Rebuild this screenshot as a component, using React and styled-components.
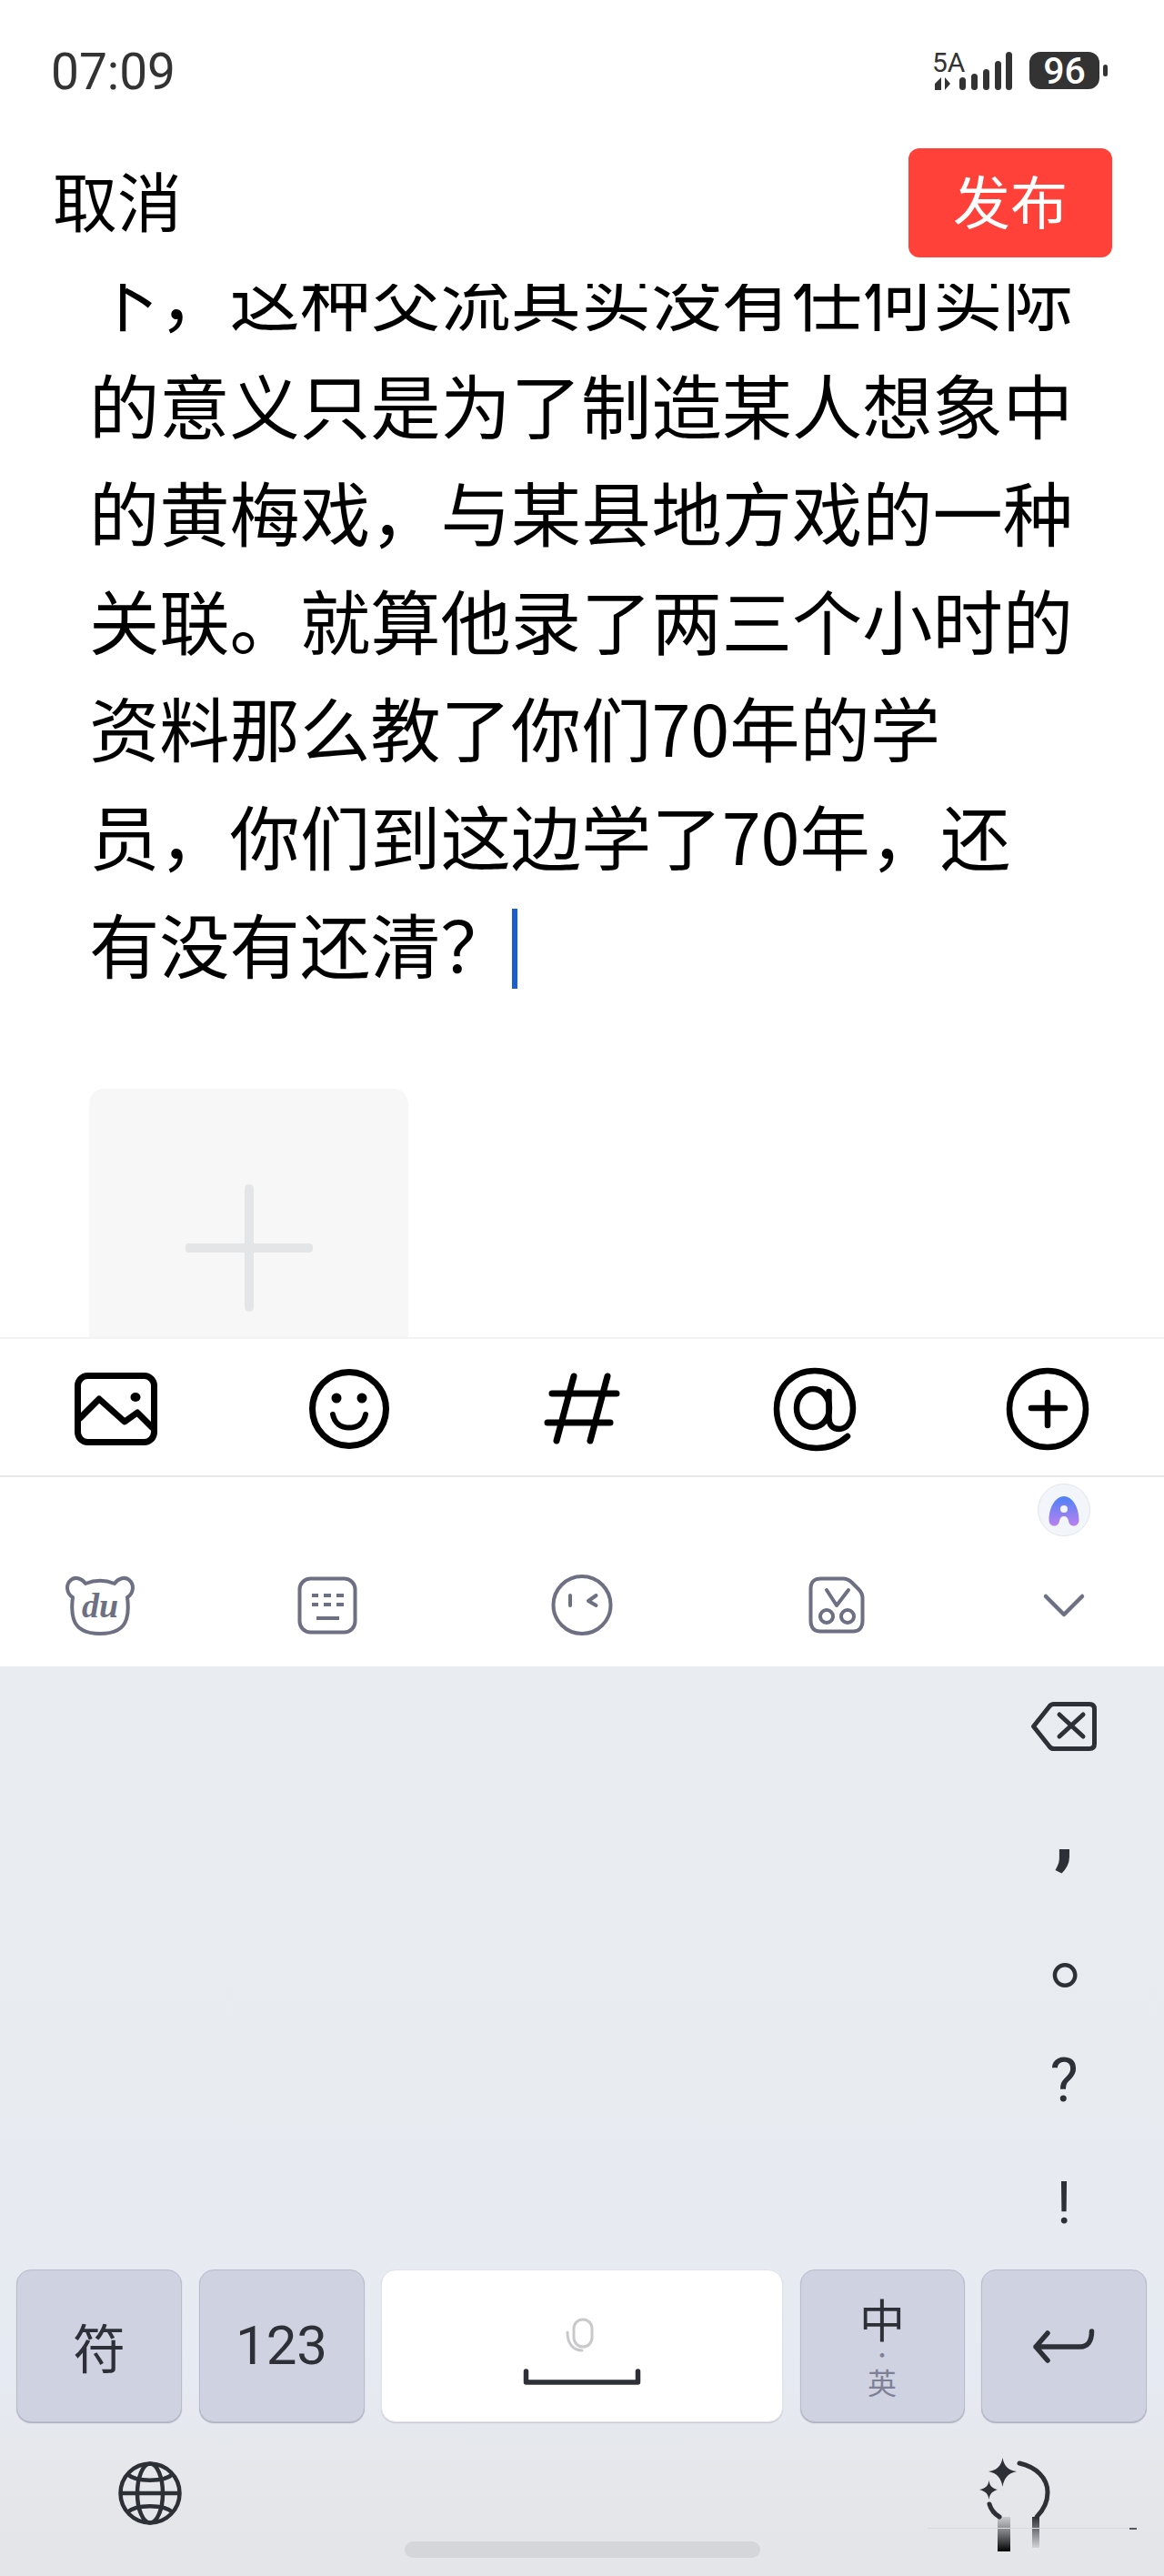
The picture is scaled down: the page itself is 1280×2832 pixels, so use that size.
import React from "react";
import styled, { createGlobalStyle } from "styled-components";

const Global = createGlobalStyle`
  html, body { margin: 0; padding: 0; background: #fff; }
  * { box-sizing: border-box; }
`;

const CJK = `"Noto Sans CJK SC", "Noto Sans", sans-serif`;

const Page = styled.div`
  width: 1280px;
  height: 2832px;
  display: flex;
  flex-direction: column;
  overflow: hidden;
  background: #fff;
  font-family: ${CJK};
  color: #000;
`;

const StatusBar = styled.div`
  height: 120px;
  padding: 38px 60px 0 56px;
  display: flex;
  justify-content: space-between;
  align-items: center;
`;
const Clock = styled.span`
  font-family: Roboto, sans-serif;
  font-size: 55px;
  line-height: 60px;
  color: #333;
`;
const Header = styled.div`
  padding: 43px 57px 0 58px;
  display: flex;
  justify-content: space-between;
  align-items: center;
`;
const Cancel = styled.span`
  font-size: 71px;
  line-height: 110px;
  padding-bottom: 10px;
`;
const Publish = styled.button`
  width: 224px;
  height: 120px;
  border: 0;
  padding: 0 0 8px;
  border-radius: 12px;
  background: #ff4139;
  color: #fff;
  font-family: ${CJK};
  font-size: 63px;
  line-height: 112px;
`;

const Editor = styled.div`
  height: 1158px;
  margin-top: 29px;
  padding-left: 98px;
  overflow: hidden;
`;
const Body = styled.div`
  margin-top: -47px;
  font-size: 77.3px;
  line-height: 118.6px;
  white-space: nowrap;
`;
const Line = styled.div``;
const Caret = styled.span`
  display: inline-block;
  width: 6px;
  height: 88px;
  margin: 0 0 12px 1px;
  vertical-align: middle;
  background: #1a5fd0;
`;
const AddCard = styled.div`
  width: 351px;
  height: 351px;
  margin-top: 98px;
  margin-left: 0;
  border-radius: 16px;
  background: #f7f7f7;
  display: flex;
  align-items: center;
  justify-content: center;
`;

const Toolbar = styled.div`
  height: 154px;
  padding-top: 3px;
  display: grid;
  grid-template-columns: repeat(5, 1fr);
  align-items: center;
  justify-items: center;
  border-top: 2px solid #f3f3f3;
  border-bottom: 2px solid #e8e8e8;
`;

const ImeBar = styled.div`
  height: 208px;
  padding-top: 7px;
  display: flex;
  flex-direction: column;
`;
const AiRow = styled.div`
  display: flex;
  justify-content: flex-end;
  padding-right: 81px;
`;
const AiBadge = styled.div`
  width: 58px;
  height: 58px;
  border-radius: 50%;
  background: #f2f5fa;
  border: 1px solid #e3e5ea;
`;
const ImeTools = styled.div`
  margin-top: 42px;
  display: grid;
  grid-template-columns: 220px 280px 280px 280px 220px;
  align-items: center;
  justify-items: center;
`;

const Keyboard = styled.div`
  flex: 1;
  display: flex;
  flex-direction: column;
  background: linear-gradient(180deg, #e9ecf0 0%, #e8ebf0 45%, #e6eaf2 78%, #e5e6e9 92%, #e4e5e8 100%);
`;
const KeyArea = styled.div`
  height: 663px;
  display: flex;
  justify-content: flex-end;
  padding-right: 50px;
`;
const PunctColumn = styled.div`
  width: 120px;
  display: flex;
  flex-direction: column;
`;
const PunctCell = styled.div`
  height: 132px;
  display: flex;
  align-items: center;
  justify-content: center;
  color: #2d3036;
  font-family: Roboto, sans-serif;
  font-size: ${(p) => p.$size || 62}px;
  font-weight: ${(p) => p.$weight || 400};
  line-height: 1;
  padding: ${(p) => p.$pad || "0"};
`;
const KeyRow = styled.div`
  padding-left: 18px;
  display: grid;
  grid-template-columns: 182px 182px 442px 181px 182px;
  column-gap: 18.5px;
`;
const Key = styled.div`
  height: 168px;
  border-radius: 16px;
  display: flex;
  flex-direction: column;
  align-items: center;
  justify-content: center;
  gap: ${(p) => p.$gap || 0}px;
  padding-top: ${(p) => p.$top || 0}px;
  color: #2d3036;
  background: ${(p) => (p.$light ? "#fff" : "#cfd2e0")};
  border: 1px solid ${(p) => (p.$light ? "#e2e3e8" : "#b9bccb")};
  box-shadow: 0 1px 1px ${(p) => (p.$light ? "#c6c8cf" : "#a9acbc")};
`;
const KeyLabel = styled.span`
  font-family: ${(p) => (p.$latin ? "Roboto, sans-serif" : CJK)};
  font-weight: 400;
  font-size: ${(p) => p.$size}px;
  line-height: ${(p) => p.$height || p.$size}px;
  color: ${(p) => p.$color || "inherit"};
`;
const BottomRow = styled.div`
  flex: 1;
  display: grid;
  grid-template-columns: 445px 391px 1fr;
`;
const GlobeSlot = styled.div`
  padding: 43px 0 0 130px;
`;
const HomeBar = styled.div`
  width: 391px;
  height: 18px;
  margin-top: 131px;
  border-radius: 9px;
  background: #d5d6d9;
`;
const MagicSlot = styled.div`
  padding: 39px 0 0 241px;
`;
const Icon = styled.svg`
  display: block;
  flex: none;
  overflow: visible;
`;

const lines = [
  "下，这种交流其实没有任何实际",
  "的意义只是为了制造某人想象中",
  "的黄梅戏，与某县地方戏的一种",
  "关联。就算他录了两三个小时的",
  "资料那么教了你们70年的学",
  "员，你们到这边学了70年，还",
];

function StatusIcons() {
  const bars = [
    [27, 14], [40, 18], [53, 23], [66, 32], [78, 42],
  ];
  return (
    <Icon width="192" height="48" viewBox="0 0 192 48">
      <text x="-3" y="24" fontFamily="Roboto, sans-serif" fontSize="30" fill="#333">5A</text>
      <path d="M0 37 L7 30 V44 H0Z M11 30 L17 37 L11 44Z" fill="#333" />
      {bars.map(([x, h]) => (
        <rect key={x} x={x} y={44 - h} width="7" height={h} rx="3.5" fill="#333" />
      ))}
      <rect x="104" y="2" width="77" height="41" rx="12" fill="#333" />
      <text x="142.5" y="37" textAnchor="middle" fontFamily="Roboto, sans-serif" fontSize="41" fontWeight="500" fill="#fff">96</text>
      <rect x="185" y="16" width="5" height="13" rx="2.5" fill="#333" />
    </Icon>
  );
}

function ImageIcon() {
  return (
    <Icon width="92" height="80" viewBox="0 0 92 80" fill="none" stroke="#000" strokeWidth="7" strokeLinejoin="round" strokeLinecap="round">
      <rect x="3.5" y="3.5" width="84" height="73" rx="11" />
      <path d="M6 50 L27 29 L55 54 L69 44 L85 60" />
      <ellipse cx="67" cy="27" rx="5.5" ry="5" fill="#000" stroke="none" />
    </Icon>
  );
}
function SmileIcon() {
  return (
    <Icon width="88" height="88" viewBox="0 0 88 88" fill="none" stroke="#000" strokeWidth="7" strokeLinecap="round">
      <circle cx="44" cy="44" r="40.5" />
      <circle cx="30" cy="32" r="5.5" fill="#000" stroke="none" />
      <circle cx="58" cy="32" r="5.5" fill="#000" stroke="none" />
      <path d="M26 50 C28 60 35 64.5 44 64.5 C53 64.5 60 60 62 50" strokeWidth="6" />
    </Icon>
  );
}
function HashIcon() {
  return (
    <Icon width="82" height="78" viewBox="0 0 82 78" fill="none" stroke="#000" strokeWidth="7" strokeLinecap="round">
      <path d="M8 22 H79 M3 54 H72 M32 3 L13 74 M69 3 L50 74" />
    </Icon>
  );
}
function AtIcon() {
  return (
    <Icon width="92" height="92" viewBox="0 0 92 92" fill="none" stroke="#000" strokeWidth="6.5" strokeLinecap="round">
      <path d="M82 76 C72 85 60 89 48 89 C22 89 4 70 4 46 C4 22 22 4 46 4 C70 4 88 22 88 45 C88 58 82 68 73 68 C66 68 61.5 64 61.5 56 L61.5 27" />
      <ellipse cx="44" cy="45" rx="18" ry="21" />
    </Icon>
  );
}
function PlusCircleIcon() {
  return (
    <Icon width="92" height="92" viewBox="0 0 92 92" fill="none" stroke="#000" strokeWidth="6.5" strokeLinecap="round">
      <circle cx="46" cy="46" r="42" />
      <path d="M28 45 H65 M46 28 V64" />
    </Icon>
  );
}

const imeStroke = { fill: "none", stroke: "#6d6f82", strokeWidth: 4, strokeLinecap: "round", strokeLinejoin: "round" };

function BearIcon() {
  return (
    <Icon width="76" height="66" viewBox="0 0 76 66" {...imeStroke}>
      <path d="M22 9 C18 3 10 1 6 5 C0 10 1 20 8 24 C7 32 7 42 9 48 C12 58 22 64 38 64 C54 64 64 58 67 48 C69 42 69 32 68 24 C75 20 76 10 70 5 C66 1 58 3 54 9 C44 5 32 5 22 9 Z" />
      <text x="38" y="46" textAnchor="middle" fontFamily='"Liberation Serif", serif' fontStyle="italic" fontWeight="700" fontSize="38" fill="#6d6f82" stroke="none">du</text>
    </Icon>
  );
}
function KeyboardIcon() {
  return (
    <Icon width="66" height="64" viewBox="0 0 66 64" {...imeStroke}>
      <rect x="2.5" y="2.5" width="61" height="59" rx="12" />
      <path d="M16 21 H23 M29 21 H37 M43 21 H51 M16 31 H23 M29 31 H37 M43 31 H51 M21 46 H46" strokeLinecap="butt" />
    </Icon>
  );
}
function WinkIcon() {
  return (
    <Icon width="68" height="67" viewBox="0 0 68 67" {...imeStroke}>
      <circle cx="34" cy="33.5" r="31.5" />
      <path d="M21 23 V34 M49.5 23 L41 29 L49.5 34" />
    </Icon>
  );
}
function ScissorIcon() {
  return (
    <Icon width="62" height="63" viewBox="0 0 62 63" {...imeStroke}>
      <path d="M14 2.5 H38 C42 2.5 45 4 48 7 L55 14 C58 17 59.5 20 59.5 24 V49 C59.5 56 56 60.5 49 60.5 H13 C6 60.5 2.5 56 2.5 49 V14 C2.5 6 6 2.5 14 2.5 Z" />
      <path d="M20 15 L31 32 L44 15" />
      <circle cx="20" cy="44" r="7" />
      <circle cx="43" cy="44" r="7" />
    </Icon>
  );
}
function ChevronIcon() {
  return (
    <Icon width="44" height="26" viewBox="0 0 44 26" {...imeStroke} strokeWidth="4.5">
      <path d="M2 3 L22 23 L42 3" />
    </Icon>
  );
}
function AiMark() {
  return (
    <Icon width="56" height="56" viewBox="0 0 56 56">
      <defs>
        <linearGradient id="aiFill" x1="0" y1="0" x2="0" y2="1">
          <stop offset="0" stopColor="#4b82f6" />
          <stop offset="1" stopColor="#bb80ef" />
        </linearGradient>
      </defs>
      <path d="M28 13 C19 13 11.5 25 11.5 39 C11.5 43 14 45.5 17 45.5 C21 45.5 22.5 43 23 40 C23.5 37 25 35 28 35 C31 35 32.5 37 33 40 C33.5 43 35 45.5 39 45.5 C42 45.5 44.5 43 44.5 39 C44.5 25 37 13 28 13 Z" fill="url(#aiFill)" />
      <circle cx="28" cy="27" r="4" fill="#f2f5fa" />
    </Icon>
  );
}
function BackspaceIcon() {
  return (
    <Icon width="72" height="54" viewBox="0 0 72 54" fill="none" stroke="#2d3036" strokeWidth="5" strokeLinejoin="round" strokeLinecap="round">
      <path d="M2.5 27 L20 5 C21 3.5 22 2.5 25 2.5 H64 C67.5 2.5 69.5 4.5 69.5 8 V46 C69.5 49.5 67.5 51.5 64 51.5 H25 C22 51.5 21 50.5 20 49 Z" />
      <path d="M31 14 L57 38 M57 14 L31 38" />
    </Icon>
  );
}
function MicIcon() {
  return (
    <Icon width="36" height="38" viewBox="0 0 36 38" fill="none" stroke="#c9c9cb" strokeWidth="3" strokeLinecap="round">
      <rect x="9" y="2" width="20" height="30" rx="10" />
      <path d="M2 16 C2 28 8 36 18 36" />
    </Icon>
  );
}
function SpaceGlyph() {
  return (
    <Icon width="128" height="18" viewBox="0 0 128 18" fill="none" stroke="#2d3036" strokeWidth="5.5" strokeLinecap="round" strokeLinejoin="round">
      <path d="M2.5 3 V15 H125.5 V3" />
    </Icon>
  );
}
function EnterIcon() {
  return (
    <Icon width="68" height="38" viewBox="0 0 68 38" fill="none" stroke="#2d3036" strokeWidth="5.5" strokeLinecap="round" strokeLinejoin="round">
      <path d="M16 5 L3 20 L16 35 M3 20 H52 C60 20 64.5 14 64.5 3" />
    </Icon>
  );
}
function GlobeIcon() {
  return (
    <Icon width="70" height="70" viewBox="0 0 70 70" fill="none" stroke="#2d3036" strokeWidth="4.5">
      <circle cx="35" cy="35" r="32.5" />
      <ellipse cx="35" cy="35" rx="14" ry="32.5" />
      <path d="M2.5 35 H67.5 M10 14 C20 23 50 23 60 14 M10 56 C20 47 50 47 60 56" />
    </Icon>
  );
}
function MagicIcon() {
  return (
    <Icon width="180" height="106" viewBox="0 0 180 106">
      <defs>
        <linearGradient id="stemA" x1="0" y1="0" x2="0" y2="1">
          <stop offset="0" stopColor="#2d3036" stopOpacity="0.15" />
          <stop offset="1" stopColor="#000" />
        </linearGradient>
        <linearGradient id="stemB" x1="0" y1="0" x2="0" y2="1">
          <stop offset="0" stopColor="#2d3036" />
          <stop offset="1" stopColor="#2d3036" stopOpacity="0.1" />
        </linearGradient>
      </defs>
      <path d="M25.5 0 C27 9 32 14 41 15 C32 17 27 22 25.5 32 C24 22 19 17 10 15 C19 14 24 9 25.5 0 Z" fill="#2d3036" />
      <path d="M10.5 25 C11.5 31 14 33.5 20 35 C14 37 11.5 39.5 10.5 46 C9.5 39.5 7 37 0 35 C7 33.5 9.5 31 10.5 25 Z" fill="#2d3036" />
      <path d="M44 6 C62 10 75 22 75 38 C75 48 70 58 63 65 M11 51 C13 58 17 62 22 65" fill="none" stroke="#2d3036" strokeWidth="5" strokeLinecap="round" />
      <rect x="20" y="65" width="14" height="38" fill="url(#stemA)" />
      <rect x="58" y="65" width="8" height="34" fill="url(#stemB)" />
      <rect x="-57" y="77" width="230" height="1" fill="#d9dade" />
      <rect x="165" y="77" width="8" height="2" fill="#55575c" />
    </Icon>
  );
}

export default function App() {
  return (
    <Page>
      <Global />
      <StatusBar>
        <Clock>07:09</Clock>
        <StatusIcons />
      </StatusBar>
      <Header>
        <Cancel>取消</Cancel>
        <Publish>发布</Publish>
      </Header>
      <Editor>
        <Body>
          {lines.map((t) => (
            <Line key={t}>{t}</Line>
          ))}
          <Line>
            有没有还清？
            <Caret />
          </Line>
        </Body>
        <AddCard>
          <Icon width="140" height="140" viewBox="0 0 140 140" fill="#e4e5e7">
            <rect x="0" y="65" width="140" height="10" rx="4" />
            <rect x="65" y="0" width="10" height="140" rx="5" />
          </Icon>
        </AddCard>
      </Editor>
      <Toolbar>
        <ImageIcon />
        <SmileIcon />
        <HashIcon />
        <AtIcon />
        <PlusCircleIcon />
      </Toolbar>
      <ImeBar>
        <AiRow>
          <AiBadge>
            <AiMark />
          </AiBadge>
        </AiRow>
        <ImeTools>
          <BearIcon />
          <KeyboardIcon />
          <WinkIcon />
          <ScissorIcon />
          <ChevronIcon />
        </ImeTools>
      </ImeBar>
      <Keyboard>
        <KeyArea>
          <PunctColumn>
            <PunctCell>
              <BackspaceIcon />
            </PunctCell>
            <PunctCell $size={84} $weight={900} $pad="0 0 30px 0">,</PunctCell>
            <PunctCell $pad="0 0 42px 56px">
              <KeyLabel $size={88}>。</KeyLabel>
            </PunctCell>
            <PunctCell $size={66} $pad="0 0 12px 0">?</PunctCell>
            <PunctCell $size={64} $pad="0 0 6px 0">!</PunctCell>
          </PunctColumn>
        </KeyArea>
        <KeyRow>
          <Key>
            <KeyLabel $size={58}>符</KeyLabel>
          </Key>
          <Key>
            <KeyLabel $latin $size={60}>123</KeyLabel>
          </Key>
          <Key $light $gap={18} $top={12}>
            <MicIcon />
            <SpaceGlyph />
          </Key>
          <Key>
            <KeyLabel $size={50} $height={54}>中</KeyLabel>
            <KeyLabel $size={22} $height={24} $color="#7e8196">·</KeyLabel>
            <KeyLabel $size={32} $height={38} $color="#7e8196">英</KeyLabel>
          </Key>
          <Key>
            <EnterIcon />
          </Key>
        </KeyRow>
        <BottomRow>
          <GlobeSlot>
            <GlobeIcon />
          </GlobeSlot>
          <HomeBar />
          <MagicSlot>
            <MagicIcon />
          </MagicSlot>
        </BottomRow>
      </Keyboard>
    </Page>
  );
}
